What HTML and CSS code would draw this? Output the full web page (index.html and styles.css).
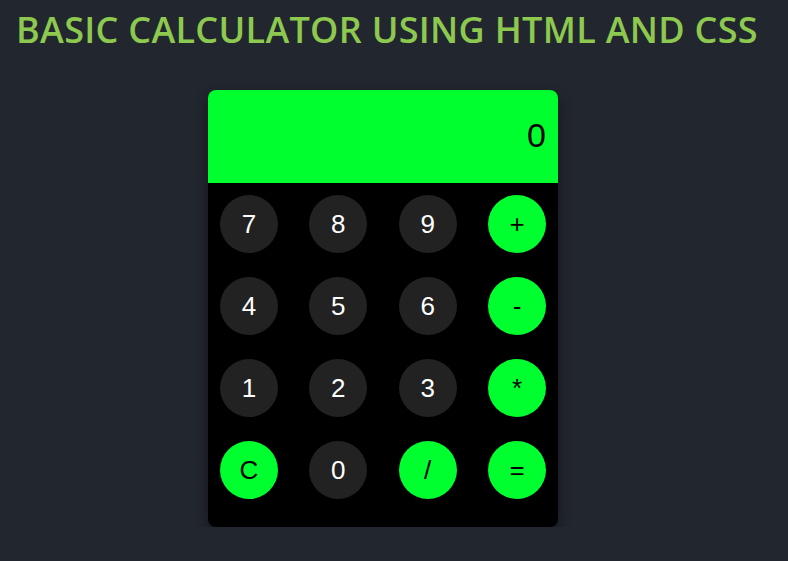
FILE: index.html
```html
<!DOCTYPE html>
<html lang="en">
<head>
<meta charset="utf-8">
<title>Basic Calculator</title>
<link rel="stylesheet" href="styles.css">
</head>
<body>
<h1 class="title">BASIC CALCULATOR USING HTML AND CSS</h1>
<div class="calc">
  <div class="display">0</div>
  <div class="keys">
    <button class="key">7</button>
    <button class="key">8</button>
    <button class="key">9</button>
    <button class="key op">+</button>
    <button class="key">4</button>
    <button class="key">5</button>
    <button class="key">6</button>
    <button class="key op">-</button>
    <button class="key">1</button>
    <button class="key">2</button>
    <button class="key">3</button>
    <button class="key op">*</button>
    <button class="key op">C</button>
    <button class="key">0</button>
    <button class="key op">/</button>
    <button class="key op">=</button>
  </div>
</div>
</body>
</html>
```
FILE: styles.css
```css
html, body {
  background: #22262f;
}
body {
  margin: 8px;
}
.title {
  margin: 0;
  padding: 0 0 0 8px;
  font-family: "Open Sans", sans-serif;
  font-weight: 600;
  font-size: 36px;
  letter-spacing: 0.3px;
  line-height: 44px;
  color: #8ec94f;
}
.calc {
  width: 350px;
  margin: 38px 0 0 200px;
  background: #000;
  border-radius: 8px;
  overflow: hidden;
  box-shadow: 0 6px 14px rgba(0, 0, 0, 0.45);
}
.display {
  height: 93px;
  background: #00ff2f;
  color: #000;
  font-family: "Liberation Sans", Arial, sans-serif;
  font-size: 34px;
  text-align: right;
  padding-right: 12px;
  line-height: 90px;
  box-sizing: border-box;
}
.keys {
  display: grid;
  grid-template-columns: repeat(4, 58px);
  justify-content: space-between;
  row-gap: 24px;
  padding: 12px 12px 28px 12px;
}
.key {
  width: 58px;
  height: 58px;
  border-radius: 50%;
  border: none;
  background: #222222;
  color: #fff;
  font-family: "Liberation Sans", Arial, sans-serif;
  font-size: 26px;
  padding: 0;
  display: flex;
  align-items: center;
  justify-content: center;
}
.key.op {
  background: #00ff2f;
  color: #000;
}
```
